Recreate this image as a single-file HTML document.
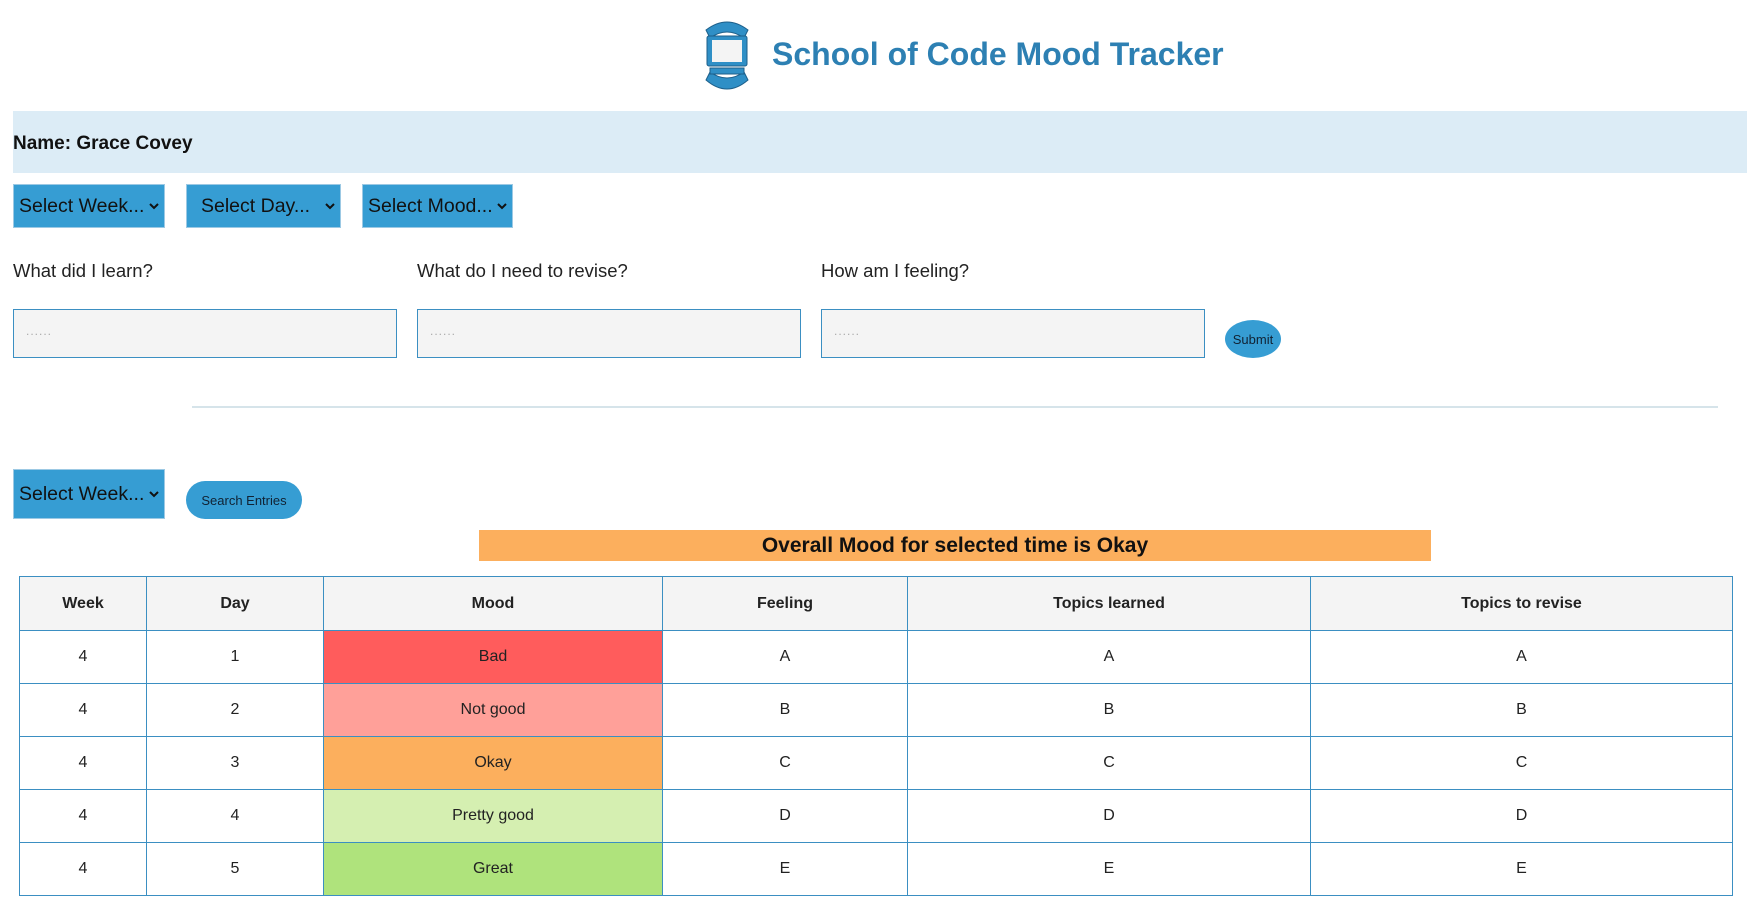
<!DOCTYPE html>
<html><head><meta charset="utf-8"><style>
*{box-sizing:border-box;margin:0;padding:0}
body{width:1747px;height:910px;background:#fff;font-family:"Liberation Sans",sans-serif;position:relative;overflow:hidden;color:#111}
.a{position:absolute}
.sel{position:absolute;background:#369dd3;border:1px solid #9cc9e4;font-size:19.5px;color:#111;display:flex;align-items:center;padding-left:5px}
.sel svg{position:absolute;right:5px;top:50%;margin-top:-3px}
.lbl{position:absolute;font-size:18.5px;color:#222}
.inp{position:absolute;background:#f4f4f4;border:1px solid #3b8fc2;height:49px;width:384px;top:309px}
.inp span{position:absolute;left:12px;top:14px;color:#aaa;font-size:12px;letter-spacing:1px}
.btn{position:absolute;background:#369dd3;border-radius:50%;font-size:13px;color:#123;display:flex;align-items:center;justify-content:center}
table{position:absolute;left:19px;top:576px;width:1714px;border-collapse:collapse;font-size:16px}
td,th{border:1px solid #3b8fc2;text-align:center;height:53px;color:#222}
th{background:#f4f4f4;font-weight:bold;font-size:16px;height:54px}
</style></head><body>
<svg class="a" style="left:698px;top:20px" width="58" height="72" viewBox="0 0 58 72">
<path d="M8 10 Q29 -6 50 10 L46 18 Q29 6 12 18Z" fill="#2f8fc6" stroke="#1d5f8a"/>
<path d="M8 60 Q29 78 50 60 L46 52 Q29 64 12 52Z" fill="#2f8fc6" stroke="#1d5f8a"/>
<rect x="9" y="16" width="40" height="30" rx="2" fill="#2f8fc6" stroke="#1d5f8a"/>
<rect x="14" y="20" width="30" height="22" fill="#f4f4f4"/>
<rect x="12" y="48" width="34" height="6" fill="#2f8fc6" stroke="#1d5f8a"/>
</svg>
<div class="a" style="left:772px;top:36px;font-size:32px;color:#2d80b3;font-weight:bold">School of Code Mood Tracker</div>
<div class="a" style="left:13px;top:111px;width:1734px;height:62px;background:#dcecf6"></div>
<div class="a" style="left:13px;top:133px;font-size:19px;font-weight:bold">Name: Grace Covey</div>
<div class="sel" style="left:13px;top:184px;width:152px;height:44px">Select Week...<svg width="10" height="7"><path d="M1 1l4 4 4-4" stroke="#111" stroke-width="2" fill="none"/></svg></div>
<div class="sel" style="left:186px;top:184px;width:155px;height:44px;padding-left:14px">Select Day...<svg width="10" height="7"><path d="M1 1l4 4 4-4" stroke="#111" stroke-width="2" fill="none"/></svg></div>
<div class="sel" style="left:362px;top:184px;width:151px;height:44px">Select Mood...<svg width="10" height="7"><path d="M1 1l4 4 4-4" stroke="#111" stroke-width="2" fill="none"/></svg></div>
<div class="lbl" style="left:13px;top:260px">What did I learn?</div>
<div class="lbl" style="left:417px;top:260px">What do I need to revise?</div>
<div class="lbl" style="left:821px;top:260px">How am I feeling?</div>
<div class="inp" style="left:13px"><span>......</span></div>
<div class="inp" style="left:417px"><span>......</span></div>
<div class="inp" style="left:821px"><span>......</span></div>
<div class="btn" style="left:1225px;top:320px;width:56px;height:38px">Submit</div>
<div class="a" style="left:192px;top:406px;width:1526px;height:2px;background:#d6e4ea"></div>
<div class="sel" style="left:13px;top:469px;width:152px;height:50px">Select Week...<svg width="10" height="7"><path d="M1 1l4 4 4-4" stroke="#111" stroke-width="2" fill="none"/></svg></div>
<div class="btn" style="left:186px;top:481px;width:116px;height:38px;border-radius:19px">Search Entries</div>
<div class="a" style="left:479px;top:530px;width:952px;height:31px;background:#fcaf5d;text-align:center;font-size:21px;font-weight:bold;line-height:32px">Overall Mood for selected time is Okay</div>
<table>
<tr><th style="width:127px">Week</th><th style="width:177px">Day</th><th style="width:339px">Mood</th><th style="width:245px">Feeling</th><th style="width:403px">Topics learned</th><th>Topics to revise</th></tr>
<tr><td>4</td><td>1</td><td style="background:#ff5c5c">Bad</td><td>A</td><td>A</td><td>A</td></tr>
<tr><td>4</td><td>2</td><td style="background:#ffa099">Not good</td><td>B</td><td>B</td><td>B</td></tr>
<tr><td>4</td><td>3</td><td style="background:#fcaf5d">Okay</td><td>C</td><td>C</td><td>C</td></tr>
<tr><td>4</td><td>4</td><td style="background:#d5efb1">Pretty good</td><td>D</td><td>D</td><td>D</td></tr>
<tr><td>4</td><td>5</td><td style="background:#afe37c">Great</td><td>E</td><td>E</td><td>E</td></tr>
</table>
</body></html>
